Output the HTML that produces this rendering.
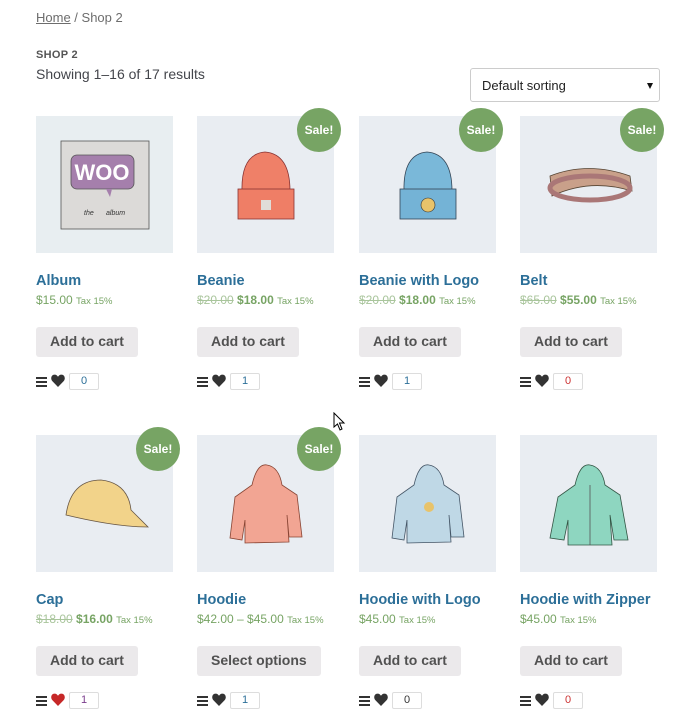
<!DOCTYPE html>
<html><head><meta charset="utf-8"><style>
*{margin:0;padding:0;box-sizing:border-box}
body{width:700px;height:728px;background:#fff;font-family:"Liberation Sans",sans-serif;color:#43454b;position:relative;overflow:hidden}
.abs{position:absolute}
.bc{left:36px;top:10px;font-size:13px;color:#6d6d6d}
.bc u{color:#6d6d6d}
.h{left:36px;top:49px;font-size:11px;font-weight:bold;color:#555;letter-spacing:.3px}
.res{left:36px;top:66px;font-size:14px;color:#43454b}
.sort{left:470px;top:68px;width:190px;height:34px;border:1px solid #ccc;border-radius:3px;font-size:13px;color:#222;padding:9px 0 0 11px}
.sort:after{content:"";position:absolute;right:6px;top:14px;border-left:3.5px solid transparent;border-right:3.5px solid transparent;border-top:6px solid #111}
.card{position:absolute;width:140px;height:290px}
.img{position:absolute;left:0;top:0;width:137px;height:137px;background:#e9edf2;overflow:hidden}
.sale{position:absolute;left:100px;top:-8px;width:44px;height:44px;border-radius:50%;background:#77a464;color:#fff;font-weight:bold;font-size:12px;text-align:center;line-height:44px}
.t{position:absolute;left:0;top:157px;font-size:14.5px;font-weight:bold;color:#2c6f98;white-space:nowrap}
.p{position:absolute;left:0;top:177px;font-size:12px;color:#77a464;white-space:nowrap}
.p del{color:#a9c59c}
.p b{font-weight:bold}
.p small{font-size:9.5px}
.btn{position:absolute;left:0;top:211px;height:30px;background:#ebe9eb;border-radius:3px;font-size:14px;font-weight:bold;color:#515151;padding:6px 14px 0;white-space:nowrap}
.ic{position:absolute;left:0;top:257px;height:17px;width:120px}
.bars{position:absolute;left:0;top:4px;width:11px;height:10px;border-top:2px solid #333;border-bottom:2px solid #333}
.bars:after{content:"";position:absolute;left:0;top:2px;width:11px;height:2px;background:#333}
.hrt{position:absolute;left:15px;top:1px;width:14px;height:13px}
.box{position:absolute;left:33px;top:0;width:30px;height:17px;border:1px solid #ddd;border-radius:2px;font-size:11px;text-align:center;line-height:15px;color:#2c6f98}
</style></head><body>
<svg width="0" height="0" style="position:absolute"><defs><path id="hp" d="M7 13 L1.2 7 C-0.8 4.6 0.4 0.6 3.6 0.6 C5.2 0.6 6.3 1.6 7 2.8 C7.7 1.6 8.8 0.6 10.4 0.6 C13.6 0.6 14.8 4.6 12.8 7 Z"/></defs></svg>
<div class="abs bc"><u>Home</u> / Shop 2</div>
<div class="abs h">SHOP 2</div>
<div class="abs res">Showing 1–16 of 17 results</div>
<div class="abs sort">Default sorting</div>

<div class="card" style="left:36px;top:116px">
<div class="img" style="background:#e8eef1"><svg width="137" height="137"><rect x="25" y="25" width="88" height="88" fill="#dcdad8" stroke="#555" stroke-width=".8"/><rect x="35" y="39" width="63" height="34" rx="6" fill="#a57fac" stroke="#555" stroke-width=".8"/><path d="M70 73 l4 8 2-8z" fill="#a57fac"/><text x="66" y="64" font-size="22" font-weight="bold" fill="#fff" text-anchor="middle" font-family="Liberation Sans">WOO</text><text x="48" y="99" font-size="7" fill="#333" font-style="italic">the</text><text x="70" y="99" font-size="7" fill="#333" font-style="italic">album</text></svg></div>
<div class="t">Album</div><div class="p">$15.00 <small>Tax 15%</small></div>
<div class="btn">Add to cart</div>
<div class="ic"><div class="bars"></div><svg class="hrt" viewBox="0 0 14 13"><use href="#hp" fill="#333"/></svg><div class="box">0</div></div></div>

<div class="card" style="left:197px;top:116px">
<div class="img"><svg width="137" height="137"><path d="M45 75 Q44 38 68 36 Q93 38 93 75z" fill="#ef8068" stroke="#833" stroke-width=".8"/><rect x="41" y="73" width="56" height="30" fill="#ef7e66" stroke="#833" stroke-width=".8"/><rect x="64" y="84" width="10" height="10" fill="#e0ddd8"/></svg></div>
<div class="sale">Sale!</div>
<div class="t">Beanie</div><div class="p"><del>$20.00</del> <b>$18.00</b> <small>Tax 15%</small></div>
<div class="btn">Add to cart</div>
<div class="ic"><div class="bars"></div><svg class="hrt" viewBox="0 0 14 13"><use href="#hp" fill="#333"/></svg><div class="box">1</div></div></div>

<div class="card" style="left:359px;top:116px">
<div class="img"><svg width="137" height="137"><path d="M45 75 Q44 38 68 36 Q93 38 93 75z" fill="#7ab8d9" stroke="#345" stroke-width=".8"/><rect x="41" y="73" width="56" height="30" fill="#74b3d6" stroke="#345" stroke-width=".8"/><circle cx="69" cy="89" r="7" fill="#e8c36a" stroke="#333" stroke-width=".6"/></svg></div>
<div class="sale">Sale!</div>
<div class="t">Beanie with Logo</div><div class="p"><del>$20.00</del> <b>$18.00</b> <small>Tax 15%</small></div>
<div class="btn">Add to cart</div>
<div class="ic"><div class="bars"></div><svg class="hrt" viewBox="0 0 14 13"><use href="#hp" fill="#333"/></svg><div class="box">1</div></div></div>

<div class="card" style="left:520px;top:116px">
<div class="img"><svg width="137" height="137"><path d="M30 60 Q68 45 110 60 L112 75 Q70 62 32 80z" fill="#c9a08a" stroke="#543" stroke-width=".8"/><ellipse cx="70" cy="72" rx="40" ry="12" fill="none" stroke="#a77" stroke-width="5"/></svg></div>
<div class="sale">Sale!</div>
<div class="t">Belt</div><div class="p"><del>$65.00</del> <b>$55.00</b> <small>Tax 15%</small></div>
<div class="btn">Add to cart</div>
<div class="ic"><div class="bars"></div><svg class="hrt" viewBox="0 0 14 13"><use href="#hp" fill="#333"/></svg><div class="box" style="color:#c33">0</div></div></div>

<div class="card" style="left:36px;top:435px">
<div class="img"><svg width="137" height="137"><path d="M30 80 Q35 45 65 45 Q92 48 95 75 L112 92 Q80 92 30 80z" fill="#f2d38a" stroke="#654" stroke-width=".8"/></svg></div>
<div class="sale">Sale!</div>
<div class="t">Cap</div><div class="p"><del>$18.00</del> <b>$16.00</b> <small>Tax 15%</small></div>
<div class="btn">Add to cart</div>
<div class="ic"><div class="bars"></div><svg class="hrt" viewBox="0 0 14 13"><use href="#hp" fill="#c62828"/></svg><div class="box" style="color:#7a3c8c">1</div></div></div>

<div class="card" style="left:197px;top:435px">
<div class="img"><svg width="137" height="137"><path d="M55 50 Q60 28 70 30 Q82 32 85 50 L100 60 L105 102 L92 102 L90 80 L92 107 L48 108 L48 85 L45 105 L33 103 L38 62z" fill="#f2a593" stroke="#843" stroke-width=".8"/></svg></div>
<div class="sale">Sale!</div>
<div class="t">Hoodie</div><div class="p">$42.00 – $45.00 <small>Tax 15%</small></div>
<div class="btn">Select options</div>
<div class="ic"><div class="bars"></div><svg class="hrt" viewBox="0 0 14 13"><use href="#hp" fill="#333"/></svg><div class="box">1</div></div></div>

<div class="card" style="left:359px;top:435px">
<div class="img"><svg width="137" height="137"><path d="M55 50 Q60 28 70 30 Q82 32 85 50 L100 60 L105 102 L92 102 L90 80 L92 107 L48 108 L48 85 L45 105 L33 103 L38 62z" fill="#bfd8e6" stroke="#456" stroke-width=".8"/><circle cx="70" cy="72" r="5" fill="#e8c36a"/></svg></div>
<div class="t">Hoodie with Logo</div><div class="p">$45.00 <small>Tax 15%</small></div>
<div class="btn">Add to cart</div>
<div class="ic"><div class="bars"></div><svg class="hrt" viewBox="0 0 14 13"><use href="#hp" fill="#333"/></svg><div class="box" style="color:#333">0</div></div></div>

<div class="card" style="left:520px;top:435px">
<div class="img"><svg width="137" height="137"><path d="M55 50 Q60 28 70 30 Q82 32 85 50 L100 60 L108 105 L94 105 L90 80 L92 110 L48 110 L48 85 L44 105 L30 103 L38 62z" fill="#8ed6c0" stroke="#354" stroke-width=".8"/><line x1="70" y1="50" x2="70" y2="110" stroke="#555" stroke-width=".8"/></svg></div>
<div class="t">Hoodie with Zipper</div><div class="p">$45.00 <small>Tax 15%</small></div>
<div class="btn">Add to cart</div>
<div class="ic"><div class="bars"></div><svg class="hrt" viewBox="0 0 14 13"><use href="#hp" fill="#333"/></svg><div class="box" style="color:#c33">0</div></div></div>

<svg class="abs" style="left:333px;top:412px" width="14" height="20"><path d="M1 1 L1 15 L4.5 12 L7 18 L9 17 L6.5 11 L11 11z" fill="#fff" stroke="#000" stroke-width="1"/></svg>
</body></html>
